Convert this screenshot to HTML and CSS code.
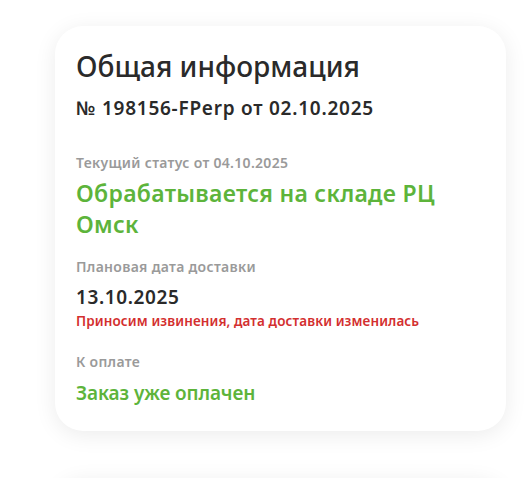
FILE: index.html
```html
<!DOCTYPE html>
<html lang="ru">
<head>
<meta charset="utf-8">
<link rel="stylesheet" href="styles.css">
</head>
<body>
<div class="page">
  <section class="card">
    <h1 class="title">Общая информация</h1>
    <div class="order">№ 198156-FPerp от 02.10.2025</div>
    <div class="block block-status">
      <div class="label">Текущий статус от 04.10.2025</div>
      <div class="status">Обрабатывается на складе РЦ Омск</div>
    </div>
    <div class="block">
      <div class="label">Плановая дата доставки</div>
      <div class="date">13.10.2025</div>
      <div class="warn">Приносим извинения, дата доставки изменилась</div>
    </div>
    <div class="block block-pay">
      <div class="label">К оплате</div>
      <div class="paid">Заказ уже оплачен</div>
    </div>
  </section>
  <section class="card card-next"></section>
</div>
</body>
</html>
```
FILE: styles.css
```css
html, body {
  margin: 0;
  padding: 0;
  background: #ffffff;
}
body {
  font-family: "Noto Sans", "Liberation Sans", sans-serif;
  color: #2a2a2a;
}
.page {
  padding: 26px 23px 0 55px;
  display: flex;
  flex-direction: column;
  gap: 47px;
}
.card {
  background: #ffffff;
  border-radius: 28px;
  box-shadow: 0 4px 22px rgba(0, 0, 0, 0.08);
  padding: 20px 21px 0 21px;
  height: 385px;
}
.card-next {
  height: 200px;
}
.title {
  margin: 0;
  font-size: 28px;
  font-weight: 500;
  line-height: 40px;
  color: #2a2a2a;
}
.order {
  margin-top: 10px;
  font-size: 19px;
  font-weight: 600;
  line-height: 24px;
  letter-spacing: 0.75px;
}
.block {
  margin-top: 18px;
}
.block-status {
  margin-top: 34px;
}
.block-pay {
  margin-top: 23px;
}
.label {
  font-size: 14px;
  font-weight: 600;
  line-height: 18px;
  letter-spacing: 0.3px;
  color: #9a9a9a;
}
.status {
  margin-top: 6px;
  font-size: 23px;
  font-weight: 600;
  line-height: 31px;
  letter-spacing: 0.3px;
  color: #5db43b;
  max-width: 380px;
}
.date {
  margin-top: 9px;
  font-size: 19px;
  font-weight: 600;
  line-height: 24px;
  letter-spacing: 0.6px;
}
.warn {
  margin-top: 3px;
  font-size: 13.5px;
  font-weight: 600;
  line-height: 18px;
  letter-spacing: 0.1px;
  color: #d32f2f;
}
.paid {
  margin-top: 10px;
  font-size: 19px;
  font-weight: 600;
  line-height: 24px;
  letter-spacing: -0.1px;
  color: #5db43b;
}
```
